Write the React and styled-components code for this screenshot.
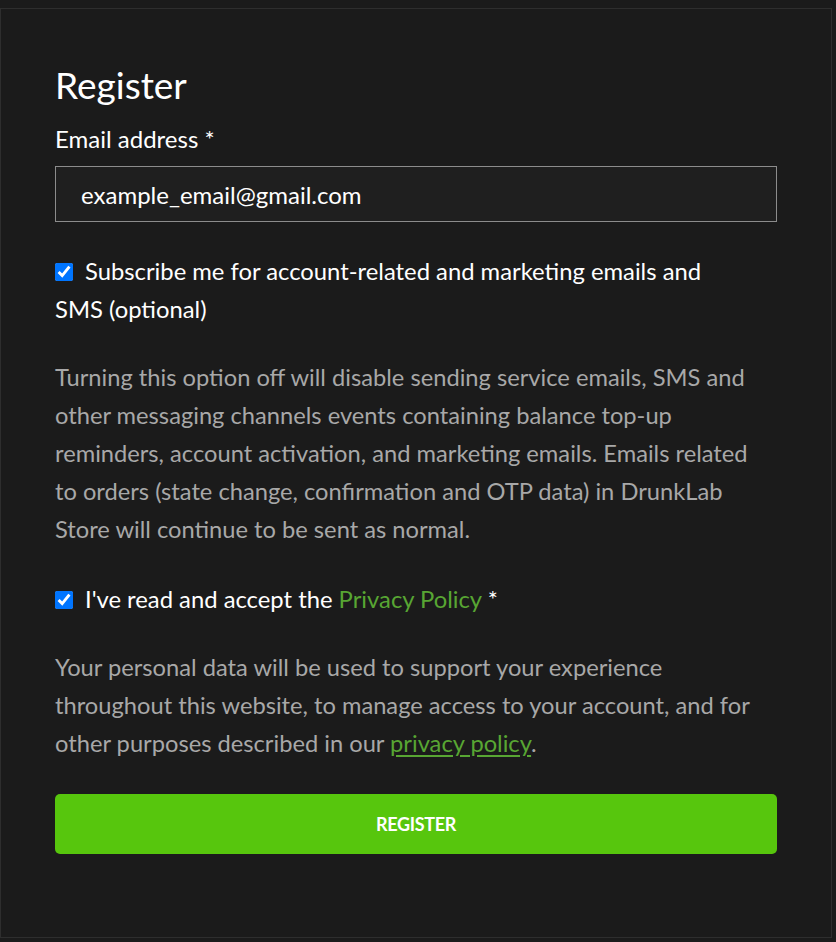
import React from "react";
import styled, { createGlobalStyle } from "styled-components";

const Global = createGlobalStyle`
  html, body { margin: 0; padding: 0; background: #1b1b1b; }
  body { padding-top: 8px; font-family: Lato, "Open Sans", sans-serif; }
  * { box-sizing: border-box; }
`;

const Panel = styled.div`
  width: 832px;
  height: 930px;
  border: 1px solid #2e2e2e;
  background: #1b1b1b;
  padding: 54px 54px 0 54px;
  display: flex;
  flex-direction: column;
`;

const Title = styled.h2`
  margin: 0;
  font-size: 37px;
  font-weight: 400;
  line-height: 1.2;
  color: #ffffff;
`;

const Label = styled.label`
  margin-top: 14px;
  font-size: 24px;
  line-height: 36px;
  color: #ffffff;
`;

const Input = styled.input`
  margin-top: 9px;
  width: 100%;
  height: 56px;
  border: 1px solid #8c8c8c;
  background: #1f1f1f;
  color: #ffffff;
  font-family: Lato, sans-serif;
  font-size: 24px;
  padding: 0 25px;
  outline: none;
`;

const CheckRow = styled.label`
  display: block;
  margin-top: ${(p) => p.$mt}px;
  max-width: ${(p) => (p.$narrow ? "690px" : "none")};
  font-size: 23.8px;
  line-height: 38px;
  color: #ffffff;
`;

const Box = styled.input`
  width: 18px;
  height: 18px;
  margin: 0 12px 0 0;
  vertical-align: -1px;
  accent-color: #0075ff;
`;

const Note = styled.p`
  margin: ${(p) => p.$mt}px 0 0 0;
  max-width: 712px;
  font-size: 23.7px;
  line-height: 38px;
  color: #a8a8a8;
`;

const Link = styled.a`
  color: #58a633;
  text-decoration: ${(p) => (p.$u ? "underline" : "none")};
  text-underline-offset: 3px;
`;

const Star = styled.span`
  color: #ffffff;
`;

const Button = styled.button`
  margin-top: 32px;
  width: 100%;
  height: 60px;
  border: none;
  border-radius: 5px;
  background: #57c60d;
  color: #ffffff;
  font-family: Lato, sans-serif;
  font-weight: 700;
  font-size: 18px;
  letter-spacing: -0.3px;
  text-transform: uppercase;
`;

export default function App() {
  return (
    <>
      <Global />
      <Panel>
        <Title>Register</Title>
        <Label>Email address <Star>*</Star></Label>
        <Input defaultValue="example_email@gmail.com" />
        <CheckRow $mt={30} $narrow>
          <Box type="checkbox" defaultChecked />
          Subscribe me for account-related and marketing emails and SMS (optional)
        </CheckRow>
        <Note $mt={30}>
          Turning this option off will disable sending service emails, SMS and other messaging channels events containing balance top-up reminders, account activation, and marketing emails. Emails related to orders (state change, confirmation and OTP data) in DrunkLab Store will continue to be sent as normal.
        </Note>
        <CheckRow $mt={32}>
          <Box type="checkbox" defaultChecked />
          I've read and accept the <Link href="#">Privacy Policy</Link> <Star>*</Star>
        </CheckRow>
        <Note $mt={30}>
          Your personal data will be used to support your experience throughout this website, to manage access to your account, and for other purposes described in our <Link href="#" $u>privacy policy</Link>.
        </Note>
        <Button>Register</Button>
      </Panel>
    </>
  );
}
